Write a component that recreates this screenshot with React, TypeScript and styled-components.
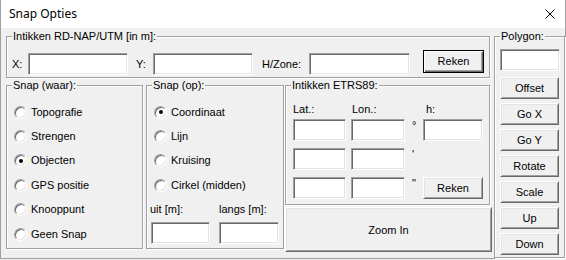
import styled, { createGlobalStyle } from "styled-components";

const GlobalStyle = createGlobalStyle`
  html, body {
    margin: 0;
    padding: 0;
    background: #f0f0f0;
  }
  body {
    font-family: "Liberation Sans", Arial, sans-serif;
    font-size: 11px;
    color: #000;
  }
`;

const Window = styled.div`
  width: 566px;
  height: 259px;
  box-sizing: border-box;
  border: 1px solid #a0a0a0;
  border-top: none;
  background: #f0f0f0;
  display: flex;
  flex-direction: column;
`;

const TitleBar = styled.div`
  height: 28px;
  flex: none;
  background: #fff;
  display: flex;
  align-items: center;
  justify-content: space-between;
  padding: 0 10px 0 8px;
`;

const Title = styled.span`
  font-family: "Noto Sans", "Open Sans", sans-serif;
  font-size: 12px;
  line-height: 16px;
`;

const Body = styled.div`
  display: flex;
  gap: 2px;
  padding: 8px 0 0 5px;
`;

const LeftColumn = styled.div`
  width: 486px;
  display: flex;
  flex-direction: column;
`;

const Group = styled.div<{ $w: number; $h: number; $ml?: number }>`
  position: relative;
  box-sizing: border-box;
  flex: none;
  width: ${(p) => p.$w}px;
  height: ${(p) => p.$h}px;
  margin-left: ${(p) => p.$ml ?? 0}px;
  border: 1px solid #a0a0a0;
  box-shadow: inset 1px 1px 0 #fff, 1px 1px 0 #fff;
`;

const Caption = styled.span`
  position: absolute;
  top: -7px;
  left: 5px;
  padding: 0 1px;
  line-height: 13px;
  background: #f0f0f0;
  white-space: nowrap;
`;

const Label = styled.span<{ $w?: number; $ml?: number }>`
  display: inline-block;
  flex: none;
  line-height: 13px;
  white-space: nowrap;
  width: ${(p) => (p.$w ? `${p.$w}px` : "auto")};
  margin-left: ${(p) => p.$ml ?? 0}px;
`;

const Field = styled.div<{ $w?: number; $ml?: number }>`
  box-sizing: border-box;
  flex: none;
  width: ${(p) => (p.$w ? `${p.$w}px` : "100%")};
  height: 22px;
  margin-left: ${(p) => p.$ml ?? 0}px;
  background: #fff;
  border: 1px solid;
  border-color: #a0a0a0 #fff #fff #a0a0a0;
  box-shadow: inset 1px 1px 0 #696969, inset -1px -1px 0 #e3e3e3;
`;

const Button = styled.button<{ $w?: number; $h?: number; $ml?: number; $default?: boolean }>`
  box-sizing: border-box;
  flex: none;
  width: ${(p) => (p.$w ? `${p.$w}px` : "100%")};
  height: ${(p) => p.$h ?? 22}px;
  margin: 0 0 0 ${(p) => p.$ml ?? 0}px;
  padding: 0;
  font-family: "Liberation Sans", Arial, sans-serif;
  font-size: 11px;
  color: #000;
  background: #f0f0f0;
  border: 1px solid;
  border-color: ${(p) => (p.$default ? "#000" : "#fff #696969 #696969 #fff")};
  box-shadow: ${(p) =>
    p.$default
      ? "inset 1px 1px 0 #fff, inset -1px -1px 0 #696969, inset -2px -2px 0 #a0a0a0"
      : "inset 1px 1px 0 #e3e3e3, inset -1px -1px 0 #a0a0a0"};
`;

const RdRow = styled.div`
  display: flex;
  align-items: center;
  padding: 16px 0 0 5px;

  & > ${Button} {
    margin-top: -6px;
  }
`;

const LowerRow = styled.div`
  display: flex;
  margin-top: 7px;
`;

const RadioList = styled.div`
  display: flex;
  flex-direction: column;
  padding: 14px 0 0 7px;
`;

const RadioRow = styled.label`
  display: flex;
  align-items: center;
  gap: 4px;
  height: 24.4px;
  line-height: 13px;
`;

const RadioDot = styled.span<{ $checked?: boolean }>`
  position: relative;
  box-sizing: border-box;
  width: 13px;
  height: 13px;
  border-radius: 50%;
  background: #fff;
  border: 1px solid;
  border-color: #a0a0a0 #fff #fff #a0a0a0;
  box-shadow: inset 1px 1px 0 #696969, inset -1px -1px 0 #e3e3e3;

  &::after {
    content: "";
    display: ${(p) => (p.$checked ? "block" : "none")};
    position: absolute;
    left: 3.5px;
    top: 3.5px;
    width: 4px;
    height: 4px;
    border-radius: 50%;
    background: #000;
  }
`;

const OffsetFields = styled.div`
  display: grid;
  grid-template-columns: 59px 60px;
  grid-template-rows: 13px 22px;
  column-gap: 9px;
  row-gap: 6px;
  margin: 5px 0 0 4px;
`;

const RightColumn = styled.div`
  display: flex;
  flex-direction: column;
  margin-left: 1px;
  width: 207px;
`;

const EtrsGrid = styled.div`
  display: grid;
  grid-template-columns: 53px 54px 8px 60px;
  grid-template-rows: 9px repeat(3, 22px);
  column-gap: 5px;
  row-gap: 7px;
  padding: 17px 0 0 7px;
`;

const GridLabel = styled.span<{ $pl?: number }>`
  align-self: start;
  line-height: 13px;
  padding-left: ${(p) => p.$pl ?? 0}px;
`;

const Unit = styled.span`
  align-self: start;
  line-height: 13px;
  padding-left: 2px;
`;

const Spacer = styled.span``;

const BigButton = styled(Button)`
  margin-top: 2px;
`;

const PolygonStack = styled.div`
  display: flex;
  flex-direction: column;
  align-items: center;
  padding-top: 12px;
  gap: 4px;

  & > ${Field} {
    margin-bottom: 2px;
  }
`;

const CloseIcon = () => (
  <svg width="10" height="10" viewBox="0 0 10 10">
    <path d="M0.5 0.5 L9.5 9.5 M9.5 0.5 L0.5 9.5" stroke="#000" strokeWidth="1" fill="none" />
  </svg>
);

const waarItems = ["Topografie", "Strengen", "Objecten", "GPS positie", "Knooppunt", "Geen Snap"];
const opItems = ["Coordinaat", "Lijn", "Kruising", "Cirkel (midden)"];
const polygonButtons = ["Offset", "Go X", "Go Y", "Rotate", "Scale", "Up", "Down"];

const App = () => {
  return (
    <>
      <GlobalStyle />
      <Window>
        <TitleBar>
          <Title>Snap Opties</Title>
          <CloseIcon />
        </TitleBar>
        <Body>
          <LeftColumn>
            <Group $w={484} $h={42}>
              <Caption>Intikken RD-NAP/UTM [in m]:</Caption>
              <RdRow>
                <Label $w={16}>X:</Label>
                <Field $w={100} />
                <Label $w={17} $ml={8}>Y:</Label>
                <Field $w={100} />
                <Label $w={47} $ml={9}>H/Zone:</Label>
                <Field $w={101} />
                <Button $w={61} $h={23} $ml={13} $default>
                  Reken
                </Button>
              </RdRow>
            </Group>
            <LowerRow>
              <Group $w={137} $h={164}>
                <Caption>Snap (waar):</Caption>
                <RadioList>
                  {waarItems.map((item) => (
                    <RadioRow key={item}>
                      <RadioDot $checked={item === "Objecten"} />
                      {item}
                    </RadioRow>
                  ))}
                </RadioList>
              </Group>
              <Group $w={138} $h={164} $ml={3}>
                <Caption>Snap (op):</Caption>
                <RadioList>
                  {opItems.map((item) => (
                    <RadioRow key={item}>
                      <RadioDot $checked={item === "Coordinaat"} />
                      {item}
                    </RadioRow>
                  ))}
                </RadioList>
                <OffsetFields>
                  <Label $ml={-1}>uit [m]:</Label>
                  <Label>langs [m]:</Label>
                  <Field />
                  <Field />
                </OffsetFields>
              </Group>
              <RightColumn>
                <Group $w={205} $h={120}>
                  <Caption>Intikken ETRS89:</Caption>
                  <EtrsGrid>
                    <GridLabel>Lat.:</GridLabel>
                    <GridLabel $pl={1}>Lon.:</GridLabel>
                    <Spacer />
                    <GridLabel $pl={3}>h:</GridLabel>

                    <Field />
                    <Field />
                    <Unit>°</Unit>
                    <Field />

                    <Field />
                    <Field />
                    <Unit>'</Unit>
                    <Spacer />

                    <Field />
                    <Field />
                    <Unit>"</Unit>
                    <Button $h={22}>Reken</Button>
                  </EtrsGrid>
                </Group>
                <BigButton $h={45}>Zoom In</BigButton>
              </RightColumn>
            </LowerRow>
          </LeftColumn>
          <Group $w={71} $h={222}>
            <Caption>Polygon:</Caption>
            <PolygonStack>
              <Field $w={60} />
              {polygonButtons.map((label) => (
                <Button key={label} $w={59}>
                  {label}
                </Button>
              ))}
            </PolygonStack>
          </Group>
        </Body>
      </Window>
    </>
  );
};

export default App;
